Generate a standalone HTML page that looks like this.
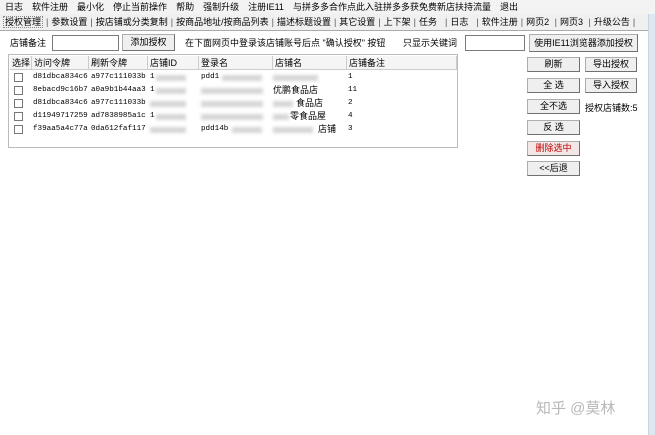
<!DOCTYPE html>
<html><head><meta charset="utf-8"><style>
*{margin:0;padding:0;box-sizing:border-box}
body{width:655px;height:435px;background:#fff;font-family:"Liberation Sans","Noto Sans CJK SC",sans-serif;font-size:9px;color:#000;position:relative;overflow:hidden}
.a{position:absolute;white-space:nowrap}
.menu{top:0;left:0;width:655px;height:14px;background:#f3f3f3;line-height:14px}
.menu span{margin-left:5px;margin-right:4px}
.tabs{top:14px;left:0;width:648px;height:17px;background:#f0f0f0;border-bottom:1px solid #aaa;line-height:17px;overflow:hidden}
.tabs i{font-style:normal;color:#555;margin:0 3px}
.btn{position:absolute;background:#efefef;border:1px solid #adadad;border-right-color:#707070;border-bottom-color:#707070;text-align:center;font-size:9px;line-height:13px;white-space:nowrap;overflow:hidden}
.inp{position:absolute;background:#fff;border:1px solid #7a7a7a}
.list{left:8px;top:54px;width:450px;height:94px;border:1px solid #bbb;background:#fff}
.hd{position:absolute;top:1px;height:14px;line-height:14px;border-right:1px solid #ccc;background:#f5f5f5;padding-left:2px;border-bottom:1px solid #ccc;overflow:hidden}
.cell{position:absolute;font-family:"Liberation Mono","Noto Sans CJK SC",monospace;font-size:7.6px;line-height:13px;white-space:nowrap}
.cb{position:absolute;width:9px;height:9px;border:1px solid #777;background:#fff}
.blur{position:absolute;height:6px;background:#d6d6d6;filter:blur(1.5px)}
</style></head><body>
<div class="a menu"><span>日志</span><span>软件注册</span><span>最小化</span><span>停止当前操作</span><span>帮助</span><span>强制升级</span><span>注册IE11</span><span>与拼多多合作点此入驻拼多多获免费新店扶持流量</span><span>退出</span></div>
<div class="a tabs"><span style="border:1px dotted #888;padding:0 1px;margin-left:3px">授权管理</span><i>|</i>参数设置<i>|</i>按店铺或分类复制<i>|</i>按商品地址/按商品列表<i>|</i>描述标题设置<i>|</i>其它设置<i>|</i>上下架<i>|</i>任务 &nbsp;<i>|</i>日志 &nbsp;<i>|</i>软件注册<i>|</i>网页2 <i>|</i>网页3 <i>|</i>升级公告<i>|</i></div>
<div style="position:absolute;left:648px;top:14px;width:7px;height:421px;background:#dde8f3;border-left:1px solid #c8d4e0"></div>
<div class="a" style="left:10px;top:37px;line-height:12px">店铺备注</div>
<div class="inp" style="left:52px;top:35px;width:67px;height:16px"></div>
<div class="btn" style="left:122px;top:34px;width:53px;height:17px;line-height:15px">添加授权</div>
<div class="a" style="left:185px;top:37px;line-height:12px">在下面网页中登录该店铺账号后点 "确认授权" 按钮</div>
<div class="a" style="left:403px;top:37px;line-height:12px">只显示关键词</div>
<div class="inp" style="left:465px;top:35px;width:60px;height:16px"></div>
<div class="btn" style="left:529px;top:34px;width:109px;height:18px;line-height:16px">使用IE11浏览器添加授权</div>
<div class="a list">
<div class="hd" style="left:1px;width:22px">选择</div>
<div class="hd" style="left:23px;width:57px">访问令牌</div>
<div class="hd" style="left:80px;width:59px">刷新令牌</div>
<div class="hd" style="left:139px;width:51px">店铺ID</div>
<div class="hd" style="left:190px;width:74px">登录名</div>
<div class="hd" style="left:264px;width:74px">店铺名</div>
<div class="hd" style="left:338px;width:110px">店铺备注</div>
</div>
<div class="btn" style="left:527px;top:57px;width:53px;height:15px">刷新</div>
<div class="btn" style="left:585px;top:57px;width:52px;height:15px">导出授权</div>
<div class="btn" style="left:527px;top:78px;width:53px;height:15px">全 选</div>
<div class="btn" style="left:585px;top:78px;width:52px;height:15px">导入授权</div>
<div class="btn" style="left:527px;top:99px;width:53px;height:15px">全不选</div>
<div class="a" style="left:585px;top:101px">授权店铺数:5</div>
<div class="btn" style="left:527px;top:120px;width:53px;height:15px">反 选</div>
<div class="btn" style="left:527px;top:141px;width:53px;height:15px;color:#c00000;background:#f3e6e6">删除选中</div>
<div class="btn" style="left:527px;top:161px;width:53px;height:15px">&lt;&lt;后退</div>
<div class="a" style="left:536px;top:397px;font-size:15px;color:#b8b8b8">知乎 @莫林</div>

<div class="cb" style="left:14px;top:73px"></div>
<div class="cb" style="left:14px;top:86px"></div>
<div class="cb" style="left:14px;top:99px"></div>
<div class="cb" style="left:14px;top:112px"></div>
<div class="cb" style="left:14px;top:125px"></div>

<div class="cell" style="left:33px;top:71px">d81dbca834c6</div>
<div class="cell" style="left:33px;top:84px">8ebacd9c16b7</div>
<div class="cell" style="left:33px;top:97px">d81dbca834c6</div>
<div class="cell" style="left:33px;top:110px">d11949717259</div>
<div class="cell" style="left:33px;top:123px">f39aa5a4c77a</div>

<div class="cell" style="left:91px;top:71px">a977c111033b</div>
<div class="cell" style="left:91px;top:84px">a0a9b1b44aa3</div>
<div class="cell" style="left:91px;top:97px">a977c111033b</div>
<div class="cell" style="left:91px;top:110px">ad7838985a1c</div>
<div class="cell" style="left:91px;top:123px">0da612faf117</div>

<div class="cell" style="left:150px;top:71px">1</div><div class="blur" style="left:156px;top:75px;width:30px"></div>
<div class="cell" style="left:150px;top:84px">1</div><div class="blur" style="left:156px;top:88px;width:30px"></div>
<div class="blur" style="left:150px;top:101px;width:36px"></div>
<div class="cell" style="left:150px;top:110px">1</div><div class="blur" style="left:156px;top:114px;width:30px"></div>
<div class="blur" style="left:150px;top:127px;width:36px"></div>

<div class="cell" style="left:201px;top:71px">pdd1</div><div class="blur" style="left:222px;top:75px;width:40px"></div>
<div class="blur" style="left:201px;top:88px;width:62px"></div>
<div class="blur" style="left:201px;top:101px;width:62px"></div>
<div class="blur" style="left:201px;top:114px;width:62px"></div>
<div class="cell" style="left:201px;top:123px">pdd14b</div><div class="blur" style="left:232px;top:127px;width:30px"></div>

<div class="blur" style="left:273px;top:75px;width:45px"></div>
<div class="a" style="left:273px;top:84px;line-height:13px">优鹏食品店</div>
<div class="blur" style="left:273px;top:101px;width:20px"></div><div class="a" style="left:296px;top:97px;line-height:13px">食品店</div>
<div class="blur" style="left:273px;top:114px;width:16px"></div><div class="a" style="left:290px;top:110px;line-height:13px">零食品屋</div>
<div class="blur" style="left:273px;top:127px;width:40px"></div><div class="a" style="left:318px;top:123px;line-height:13px">店铺</div>

<div class="cell" style="left:348px;top:71px">1</div>
<div class="cell" style="left:348px;top:84px">11</div>
<div class="cell" style="left:348px;top:97px">2</div>
<div class="cell" style="left:348px;top:110px">4</div>
<div class="cell" style="left:348px;top:123px">3</div>
</body></html>
